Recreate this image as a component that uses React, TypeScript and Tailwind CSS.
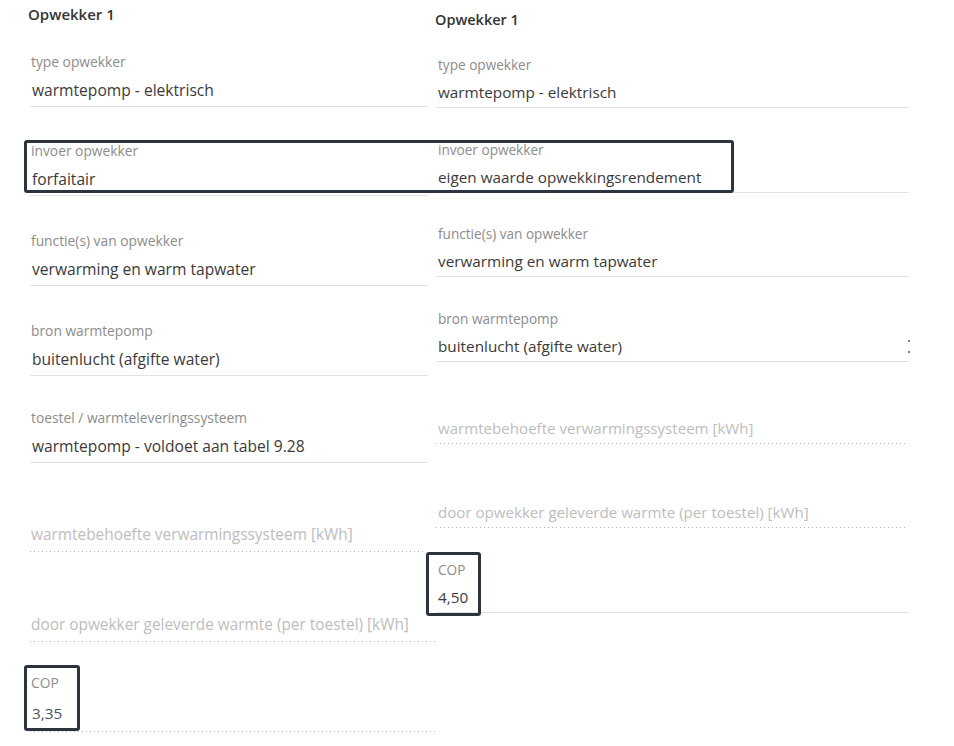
import React, { FC } from "react";

type Side = "left" | "right";

interface FieldProps {
    side: Side;
    label?: string;
    value?: string;
    placeholder?: string;
    dotted?: boolean;
    arrow?: boolean;
    className: string;
    valueClass?: string;
}

// the two columns come from screenshots at a slightly different zoom
const styles = {
    left: {
        label: "h-4 pl-px text-[13.8px] leading-4 text-[#8c8c8c]",
        value: "mt-[9px] flex h-[22px] items-center justify-between pl-[2px] text-[15.6px] leading-[22px] text-[#3a3a3a]",
        placeholder: "mt-[9px] h-[22px] pl-px text-[15.4px] leading-[22px] text-[#bdbdbd]",
        gap: "h-[5px]",
    },
    right: {
        label: "h-4 pl-[2px] text-[13.6px] leading-4 text-[#8c8c8c]",
        value: "mt-[8px] flex h-[22px] items-center justify-between pl-[2px] text-[15.3px] leading-[22px] text-[#3a3a3a]",
        placeholder: "mt-[8px] h-[22px] pl-[2px] text-[15.1px] leading-[22px] text-[#bdbdbd]",
        gap: "h-[4px]",
    },
};

const Field: FC<FieldProps> = ({ side, label, value, placeholder, dotted, arrow, className, valueClass }) => {
    const s = styles[side];
    return (
        <div className={className}>
            <div className={s.label}>{label}</div>
            {placeholder ? (
                <div className={s.placeholder}>{placeholder}</div>
            ) : (
                <div className={valueClass ?? s.value}>
                    <span>{value}</span>
                    {arrow && (
                        <span className="flex h-full translate-x-[1px] flex-col justify-center gap-[9px]">
                            <span className="h-[2px] w-[2px] rounded-full bg-[#555]" />
                            <span className="h-[2px] w-[2px] rounded-full bg-[#555]" />
                        </span>
                    )}
                </div>
            )}
            <div className={valueClass ? "h-[7px]" : s.gap} />
            {dotted ? (
                <div className="h-px bg-[repeating-linear-gradient(to_right,#b3b3b3_0px,#b3b3b3_1px,transparent_1px,transparent_4px)]" />
            ) : (
                <div className="h-px bg-[#e2e2e2]" />
            )}
        </div>
    );
};

const Highlight: FC<{ className: string }> = ({ className }) => (
    <div className={"pointer-events-none absolute rounded-[3px] border-[3px] border-[#2c3440] " + className} />
);

const App = () => {
    return (
        <div className="relative h-[746px] w-[954px] overflow-hidden bg-white font-['Open_Sans','Noto_Sans',sans-serif]">
            <div className="flex">
                {/* linker kolom */}
                <div className="flex w-[427px] shrink-0 flex-col pl-[30px]">
                    <div className="-ml-[2px] mt-[4px] h-5 text-[15px] font-semibold leading-5 text-[#333]">
                        Opwekker 1
                    </div>
                    <Field side="left" className="mt-[30px] w-[398px]" label="type opwekker" value="warmtepomp - elektrisch" />
                    <Field side="left" className="mt-[36px] w-[398px]" label="invoer opwekker" value="forfaitair" />
                    <Field side="left" className="mt-[37px] w-[398px]" label="functie(s) van opwekker" value="verwarming en warm tapwater" />
                    <Field side="left" className="mt-[37px] w-[398px]" label="bron warmtepomp" value="buitenlucht (afgifte water)" />
                    <Field side="left" className="mt-[34px] w-[398px]" label="toestel / warmteleveringssysteem" value="warmtepomp - voldoet aan tabel 9.28" />
                    <Field side="left" className="mt-[36px] w-[394px]" placeholder="warmtebehoefte verwarmingssysteem [kWh]" dotted />
                    <Field side="left" className="mt-[37px] w-[407px]" placeholder="door opwekker geleverde warmte (per toestel) [kWh]" dotted />
                    <Field
                        side="left"
                        className="mt-[33px] w-[407px]"
                        label="COP"
                        value="3,35"
                        dotted
                        valueClass="mt-[11px] h-[22px] pl-[2px] text-[15.3px] leading-[22px] text-[#4a5260]"
                    />
                </div>

                {/* rechter kolom */}
                <div className="flex flex-col pl-[9px]">
                    <div className="-ml-px mt-[10px] h-5 text-[14.5px] font-semibold leading-5 text-[#333]">
                        Opwekker 1
                    </div>
                    <Field side="right" className="mt-[27px] w-[473px]" label="type opwekker" value="warmtepomp - elektrisch" />
                    <Field side="right" className="mt-[34px] w-[473px]" label="invoer opwekker" value="eigen waarde opwekkingsrendement" />
                    <Field side="right" className="mt-[33px] w-[473px]" label="functie(s) van opwekker" value="verwarming en warm tapwater" />
                    <Field side="right" className="mt-[34px] w-[473px]" label="bron warmtepomp" value="buitenlucht (afgifte water)" arrow />
                    <Field side="right" className="mt-[31px] w-[471px]" placeholder="warmtebehoefte verwarmingssysteem [kWh]" dotted />
                    <Field side="right" className="mt-[33px] w-[471px]" placeholder="door opwekker geleverde warmte (per toestel) [kWh]" dotted />
                    <Field side="right" className="mt-[34px] w-[473px]" label="COP" value="4,50" />
                </div>
            </div>

            <Highlight className="left-[24px] top-[140px] h-[53px] w-[710px]" />
            <Highlight className="left-[426px] top-[552px] h-[64px] w-[55px]" />
            <Highlight className="left-[24px] top-[665px] h-[66px] w-[56px]" />
        </div>
    );
};

export default App;
